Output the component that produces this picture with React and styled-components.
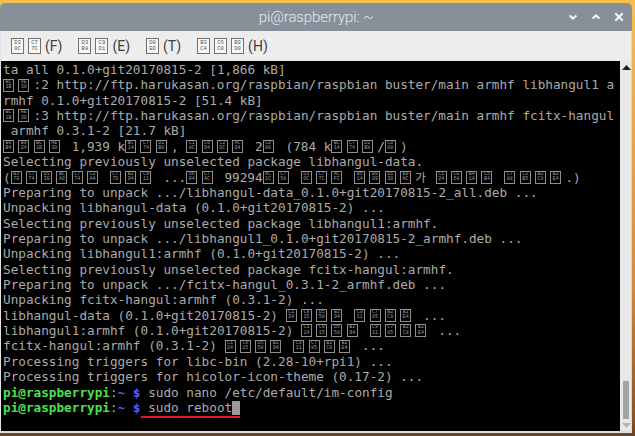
import React from 'react'
import styled, { createGlobalStyle } from 'styled-components'

const GlobalStyle = createGlobalStyle`
  html, body {
    margin: 0;
    padding: 0;
  }
  body {
    width: 635px;
    height: 436px;
    overflow: hidden;
    background: linear-gradient(180deg, #f6c04e 0%, #efa23e 35%, #d98a34 65%, #8a5326 96%, #6f4220 100%);
  }
`

const Desktop = styled.div`
  box-sizing: border-box;
  height: 436px;
  padding-top: 3px;
`

const Window = styled.div`
  width: 632px;
  display: flex;
  flex-direction: column;
  border-radius: 5px 5px 0 0;
  overflow: hidden;
`

const TitleBar = styled.div`
  height: 28px;
  background: #879099;
  display: grid;
  grid-template-columns: 1fr auto 1fr;
  align-items: center;
`

const Title = styled.div`
  grid-column: 2;
  font-family: Roboto, 'Liberation Sans', sans-serif;
  font-size: 15px;
  font-weight: 300;
  color: #e6e9ec;
  letter-spacing: -0.1px;
`

const Controls = styled.div`
  grid-column: 3;
  justify-self: end;
  display: flex;
  gap: 13px;
  padding-right: 8px;
`

const CtlIcon = styled.svg`
  width: 10px;
  height: 10px;
  display: block;
`

const MenuBar = styled.div`
  height: 30px;
  background: #ededed;
  display: flex;
  align-items: center;
  padding-left: 2px;
  border-left: 1px solid #e2e2e2;
  border-right: 1px solid #d6d6d6;
`

const MenuItem = styled.div`
  display: flex;
  align-items: center;
  padding: 0 8px;
  height: 100%;
  font-family: Roboto, 'Liberation Sans', sans-serif;
  font-size: 14px;
  color: #3f3f3f;
`

const MenuBox = styled.span`
  box-sizing: border-box;
  width: 13px;
  height: 16px;
  margin-right: 4px;
  border: 1px solid #707070;
  background: #f7f7f7;
  display: flex;
  flex-direction: column;
  align-items: center;
  justify-content: center;
  font-family: 'Liberation Mono', monospace;
  font-size: 5.5px;
  line-height: 6px;
  color: #555;
`

const Body = styled.div`
  display: flex;
  height: 370px;
  background: #000;
  border-left: 1px solid #e2e2e2;
  border-right: 1px solid #d6d6d6;
  border-bottom: 2px solid #dedede;
`

const Screen = styled.div`
  flex: 1;
  padding: 1px 0 0 2px;
  font-family: 'DejaVu Sans Mono', monospace;
  font-size: 12.7px;
  line-height: 15.36px;
  color: #ababab;
  white-space: pre;
  overflow: hidden;
`

const Row = styled.div`
  height: 15.36px;
`

const Cell = styled.span`
  display: inline-flex;
  width: 2ch;
  height: 15.36px;
  vertical-align: top;
  align-items: center;
`

const GlyphBox = styled.span`
  box-sizing: border-box;
  width: 11px;
  height: 13px;
  border: 1px solid #8e8e8e;
  display: flex;
  flex-direction: column;
  align-items: center;
  justify-content: center;
  font-family: 'Liberation Mono', monospace;
  font-size: 5px;
  line-height: 5.4px;
  color: #9c9c9c;
`

const Wide = styled.span`
  display: inline-block;
  width: 2ch;
  vertical-align: top;
  font-family: 'Noto Sans CJK KR', sans-serif;
  font-size: 11.5px;
`

const Tone = styled.span`
  font-weight: bold;
  color: ${p => (p.$tone === 'green' ? '#4ee04e' : '#5a5aff')};
`

const Marked = styled.span`
  display: inline-block;
  vertical-align: top;
  height: 16px;
  border-bottom: 2px solid #e8161c;
`

const Cursor = styled.span`
  display: inline-block;
  width: 1ch;
  height: 14.5px;
  margin-top: 1px;
  vertical-align: top;
  background: #9b9b9b;
`

const ScrollBar = styled.div`
  width: 11px;
  background: #e8e8e8;
  display: flex;
  flex-direction: column;
`

const Arrow = styled.div`
  height: 12px;
  display: flex;
  align-items: center;
  justify-content: center;
  padding-left: 1px;
`

const Track = styled.div`
  flex: 1;
  display: flex;
  flex-direction: column;
  justify-content: flex-end;
  padding-left: 3px;
`

const Thumb = styled.div`
  width: 6px;
  height: 38px;
  background: #a4a4a4;
`

const hexOf = ch => ch.codePointAt(0).toString(16).toUpperCase().padStart(4, '0')

function Tofu({ ch }) {
  const hex = hexOf(ch)
  return (
    <Cell aria-label={ch}>
      <GlyphBox>
        <span>{hex.slice(0, 2)}</span>
        <span>{hex.slice(2)}</span>
      </GlyphBox>
    </Cell>
  )
}

function MenuGlyph({ ch }) {
  const hex = hexOf(ch)
  return (
    <MenuBox aria-label={ch}>
      <span>{hex.slice(0, 2)}</span>
      <span>{hex.slice(2)}</span>
    </MenuBox>
  )
}

const isHangul = ch => {
  const c = ch.codePointAt(0)
  return c >= 0xac00 && c <= 0xd7a3
}

// the terminal font has no hangul, so most syllables come out as hex boxes
function renderText(str) {
  const out = []
  let buf = ''
  ;[...str].forEach((ch, i) => {
    if (isHangul(ch)) {
      if (buf) {
        out.push(buf)
        buf = ''
      }
      out.push(ch === '가' ? <Wide key={i}>{ch}</Wide> : <Tofu key={i} ch={ch} />)
    } else {
      buf += ch
    }
  })
  if (buf) out.push(buf)
  return out
}

const lines = [
  'ta all 0.1.0+git20170815-2 [1,866 kB]',
  '받기:2 http://ftp.harukasan.org/raspbian/raspbian buster/main armhf libhangul1 a',
  'rmhf 0.1.0+git20170815-2 [51.4 kB]',
  '받기:3 http://ftp.harukasan.org/raspbian/raspbian buster/main armhf fcitx-hangul',
  ' armhf 0.3.1-2 [21.7 kB]',
  '내려받기 1,939 k바이트, 소요시간 2초 (784 k바이트/초)',
  'Selecting previously unselected package libhangul-data.',
  '(데이터베이스 읽는중 ...현재 99294개의 파일과 디렉터리가 설치되어 있습니다.)',
  'Preparing to unpack .../libhangul-data_0.1.0+git20170815-2_all.deb ...',
  'Unpacking libhangul-data (0.1.0+git20170815-2) ...',
  'Selecting previously unselected package libhangul1:armhf.',
  'Preparing to unpack .../libhangul1_0.1.0+git20170815-2_armhf.deb ...',
  'Unpacking libhangul1:armhf (0.1.0+git20170815-2) ...',
  'Selecting previously unselected package fcitx-hangul:armhf.',
  'Preparing to unpack .../fcitx-hangul_0.3.1-2_armhf.deb ...',
  'Unpacking fcitx-hangul:armhf (0.3.1-2) ...',
  'libhangul-data (0.1.0+git20170815-2) 설정하는 중입니다 ...',
  'libhangul1:armhf (0.1.0+git20170815-2) 설정하는 중입니다 ...',
  'fcitx-hangul:armhf (0.3.1-2) 설정하는 중입니다 ...',
  'Processing triggers for libc-bin (2.28-10+rpi1) ...',
  'Processing triggers for hicolor-icon-theme (0.17-2) ...',
]

const menus = [
  { name: '파일', key: 'F' },
  { name: '편집', key: 'E' },
  { name: '탭', key: 'T' },
  { name: '도움말', key: 'H' },
]

function Prompt({ children }) {
  return (
    <Row>
      <Tone $tone="green">pi@raspberrypi</Tone>:<Tone $tone="blue">~ $</Tone>
      {children}
    </Row>
  )
}

export default function App() {
  return (
    <Desktop>
      <GlobalStyle />
      <Window>
        <TitleBar>
          <Title>pi@raspberrypi: ~</Title>
          <Controls>
            <CtlIcon viewBox="0 0 10 10">
              <path d="M1.6 3.4 L5 6.6 L8.4 3.4" stroke="#f5f6f7" strokeWidth="2" fill="none" />
            </CtlIcon>
            <CtlIcon viewBox="0 0 10 10">
              <path d="M1.6 6.6 L5 3.4 L8.4 6.6" stroke="#f5f6f7" strokeWidth="2" fill="none" />
            </CtlIcon>
            <CtlIcon viewBox="0 0 10 10">
              <path d="M1.3 1.3 L8.7 8.7 M8.7 1.3 L1.3 8.7" stroke="#f5f6f7" strokeWidth="2.1" fill="none" />
            </CtlIcon>
          </Controls>
        </TitleBar>
        <MenuBar>
          {menus.map(m => (
            <MenuItem key={m.key}>
              {[...m.name].map((ch, i) => (
                <MenuGlyph key={i} ch={ch} />
              ))}
              ({m.key})
            </MenuItem>
          ))}
        </MenuBar>
        <Body>
          <Screen>
            {lines.map((l, i) => (
              <Row key={i}>{renderText(l)}</Row>
            ))}
            <Prompt> sudo nano /etc/default/im-config</Prompt>
            <Prompt>
              <Marked>
                {' sudo reboot'}
                <Cursor />
              </Marked>
            </Prompt>
          </Screen>
          <ScrollBar>
            <Arrow>
              <svg width="9" height="5" viewBox="0 0 9 5">
                <path d="M0 5 L4.5 0 L9 5 Z" fill="#1e1e1e" />
              </svg>
            </Arrow>
            <Track>
              <Thumb />
            </Track>
            <Arrow>
              <svg width="9" height="5" viewBox="0 0 9 5">
                <path d="M0 0 L4.5 5 L9 0 Z" fill="#b4b4b4" />
              </svg>
            </Arrow>
          </ScrollBar>
        </Body>
      </Window>
    </Desktop>
  )
}
